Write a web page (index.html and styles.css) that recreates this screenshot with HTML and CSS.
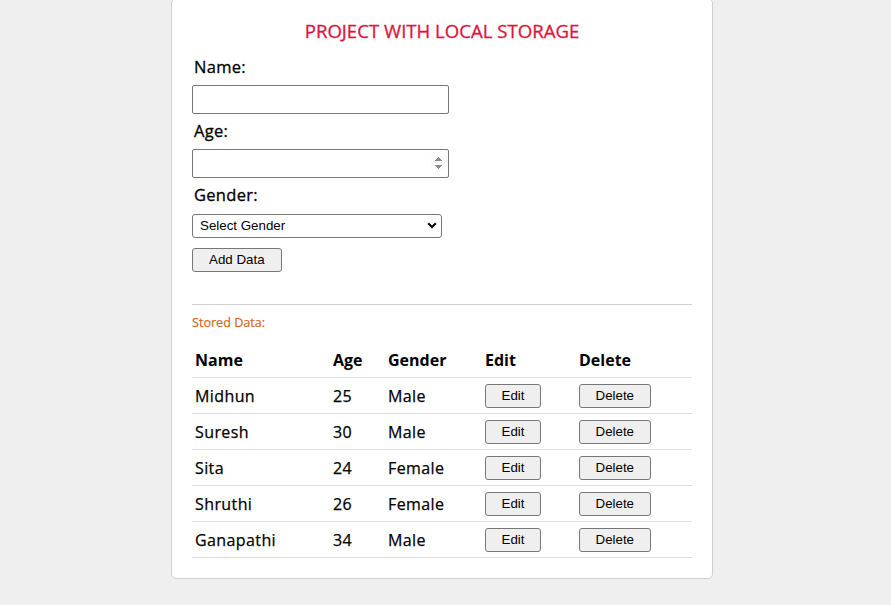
FILE: index.html
```html
<!DOCTYPE html>
<html lang="en">
<head>
<meta charset="utf-8">
<title>Project with Local Storage</title>
<link rel="stylesheet" href="styles.css">
</head>
<body>
<div class="page">
  <main class="card">
    <h1 class="title">PROJECT WITH LOCAL STORAGE</h1>
    <form class="form">
      <label class="label" for="name">Name:</label>
      <input class="field" id="name" type="text">
      <label class="label" for="age">Age:</label>
      <input class="field" id="age" type="number">
      <label class="label" for="gender">Gender:</label>
      <div class="select-wrap">
        <select class="select" id="gender">
          <option>Select Gender</option>
          <option>Male</option>
          <option>Female</option>
        </select>
        <svg class="chev" width="10" height="7" viewBox="0 0 10 7" aria-hidden="true"><polyline points="1.2,1.2 5,5 8.8,1.2" fill="none" stroke="#000" stroke-width="2"/></svg>
      </div>
      <button type="button" class="btn btn-add">Add Data</button>
    </form>
    <hr class="rule">
    <p class="stored">Stored Data:</p>
    <table class="data">
      <colgroup>
        <col class="c-name"><col class="c-age"><col class="c-gender"><col class="c-edit"><col class="c-del">
      </colgroup>
      <thead>
        <tr><th>Name</th><th>Age</th><th>Gender</th><th>Edit</th><th>Delete</th></tr>
      </thead>
      <tbody>
        <tr><td>Midhun</td><td>25</td><td>Male</td><td><button type="button" class="btn">Edit</button></td><td><button type="button" class="btn">Delete</button></td></tr>
        <tr><td>Suresh</td><td>30</td><td>Male</td><td><button type="button" class="btn">Edit</button></td><td><button type="button" class="btn">Delete</button></td></tr>
        <tr><td>Sita</td><td>24</td><td>Female</td><td><button type="button" class="btn">Edit</button></td><td><button type="button" class="btn">Delete</button></td></tr>
        <tr><td>Shruthi</td><td>26</td><td>Female</td><td><button type="button" class="btn">Edit</button></td><td><button type="button" class="btn">Delete</button></td></tr>
        <tr><td>Ganapathi</td><td>34</td><td>Male</td><td><button type="button" class="btn">Edit</button></td><td><button type="button" class="btn">Delete</button></td></tr>
      </tbody>
    </table>
  </main>
</div>
</body>
</html>
```
FILE: styles.css
```css
html, body {
  margin: 0;
  padding: 0;
  background: #efefef;
  font-family: "Open Sans", "Liberation Sans", sans-serif;
  color: #000;
}

.page {
  display: flex;
  justify-content: center;
  padding-right: 7px;
}

.card {
  width: 500px;
  padding: 20px;
  margin-top: -2px;
  background: #fff;
  border: 1px solid #d0d0d0;
  border-radius: 5px;
}

.title {
  margin: 0;
  font-size: 18.6px;
  line-height: 24px;
  font-weight: 500;
  color: #dc143c;
  text-align: center;
  -webkit-text-stroke: 0.3px #dc143c;
}

.form {
  display: flex;
  flex-direction: column;
  align-items: flex-start;
  margin-top: 12px;
}

.label {
  display: block;
  padding-left: 2px;
  font-size: 16.5px;
  line-height: 24px;
  font-weight: 500;
  letter-spacing: 0.3px;
  margin-bottom: 6px;
  -webkit-text-stroke: 0.3px #000;
}

.field {
  box-sizing: border-box;
  width: 257px;
  height: 29px;
  margin: 0 0 5px;
  padding: 1px 2px;
  border: 1px solid #767676;
  border-radius: 2px;
  background: #fff;
  font-family: "Liberation Sans", sans-serif;
  font-size: 13.33px;
}

.field::-webkit-inner-spin-button {
  opacity: 1;
}

.select-wrap {
  position: relative;
  width: 250px;
  height: 24px;
  margin-bottom: 11px;
}

.select {
  box-sizing: border-box;
  width: 250px;
  height: 24px;
  margin: 0;
  padding: 0 20px 0 7px;
  border: 1px solid #767676;
  border-radius: 3px;
  background: #fff;
  color: #000;
  font-family: "Liberation Sans", sans-serif;
  font-size: 13.33px;
  -webkit-appearance: none;
  appearance: none;
}

.chev {
  position: absolute;
  right: 5px;
  top: 9px;
  pointer-events: none;
}

.btn {
  box-sizing: border-box;
  height: 24px;
  margin: 0;
  padding: 0 15.5px;
  border: 1px solid #767676;
  border-radius: 3px;
  background: #efefef;
  color: #000;
  font-family: "Liberation Sans", sans-serif;
  font-size: 13.33px;
  line-height: 22px;
}

.btn-add {
  padding: 0 16px;
}

.rule {
  margin: 32px 0 9px;
  border: 0;
  border-top: 1px solid #cfcfcf;
  height: 0;
}

.stored {
  margin: 0 0 10px;
  font-size: 12.6px;
  line-height: 18px;
  font-weight: 500;
  color: #d2691e;
  -webkit-text-stroke: 0.2px #d2691e;
}

.data {
  width: 500px;
  table-layout: fixed;
  border-collapse: separate;
  border-spacing: 0;
}

.c-name { width: 138px; }
.c-age { width: 55px; }
.c-gender { width: 97px; }
.c-edit { width: 94px; }
.c-del { width: 116px; }

.data tr {
  height: 36px;
}

.data th,
.data td {
  padding: 0 3px;
  text-align: left;
  vertical-align: middle;
  border-bottom: 1px solid #dcdcdc;
  font-size: 16px;
  white-space: nowrap;
}

.data th {
  font-weight: 700;
}

.data td {
  font-weight: 500;
  letter-spacing: 0.4px;
  -webkit-text-stroke: 0.25px #000;
}

.data td .btn {
  letter-spacing: 0;
  -webkit-text-stroke: 0;
}
```
